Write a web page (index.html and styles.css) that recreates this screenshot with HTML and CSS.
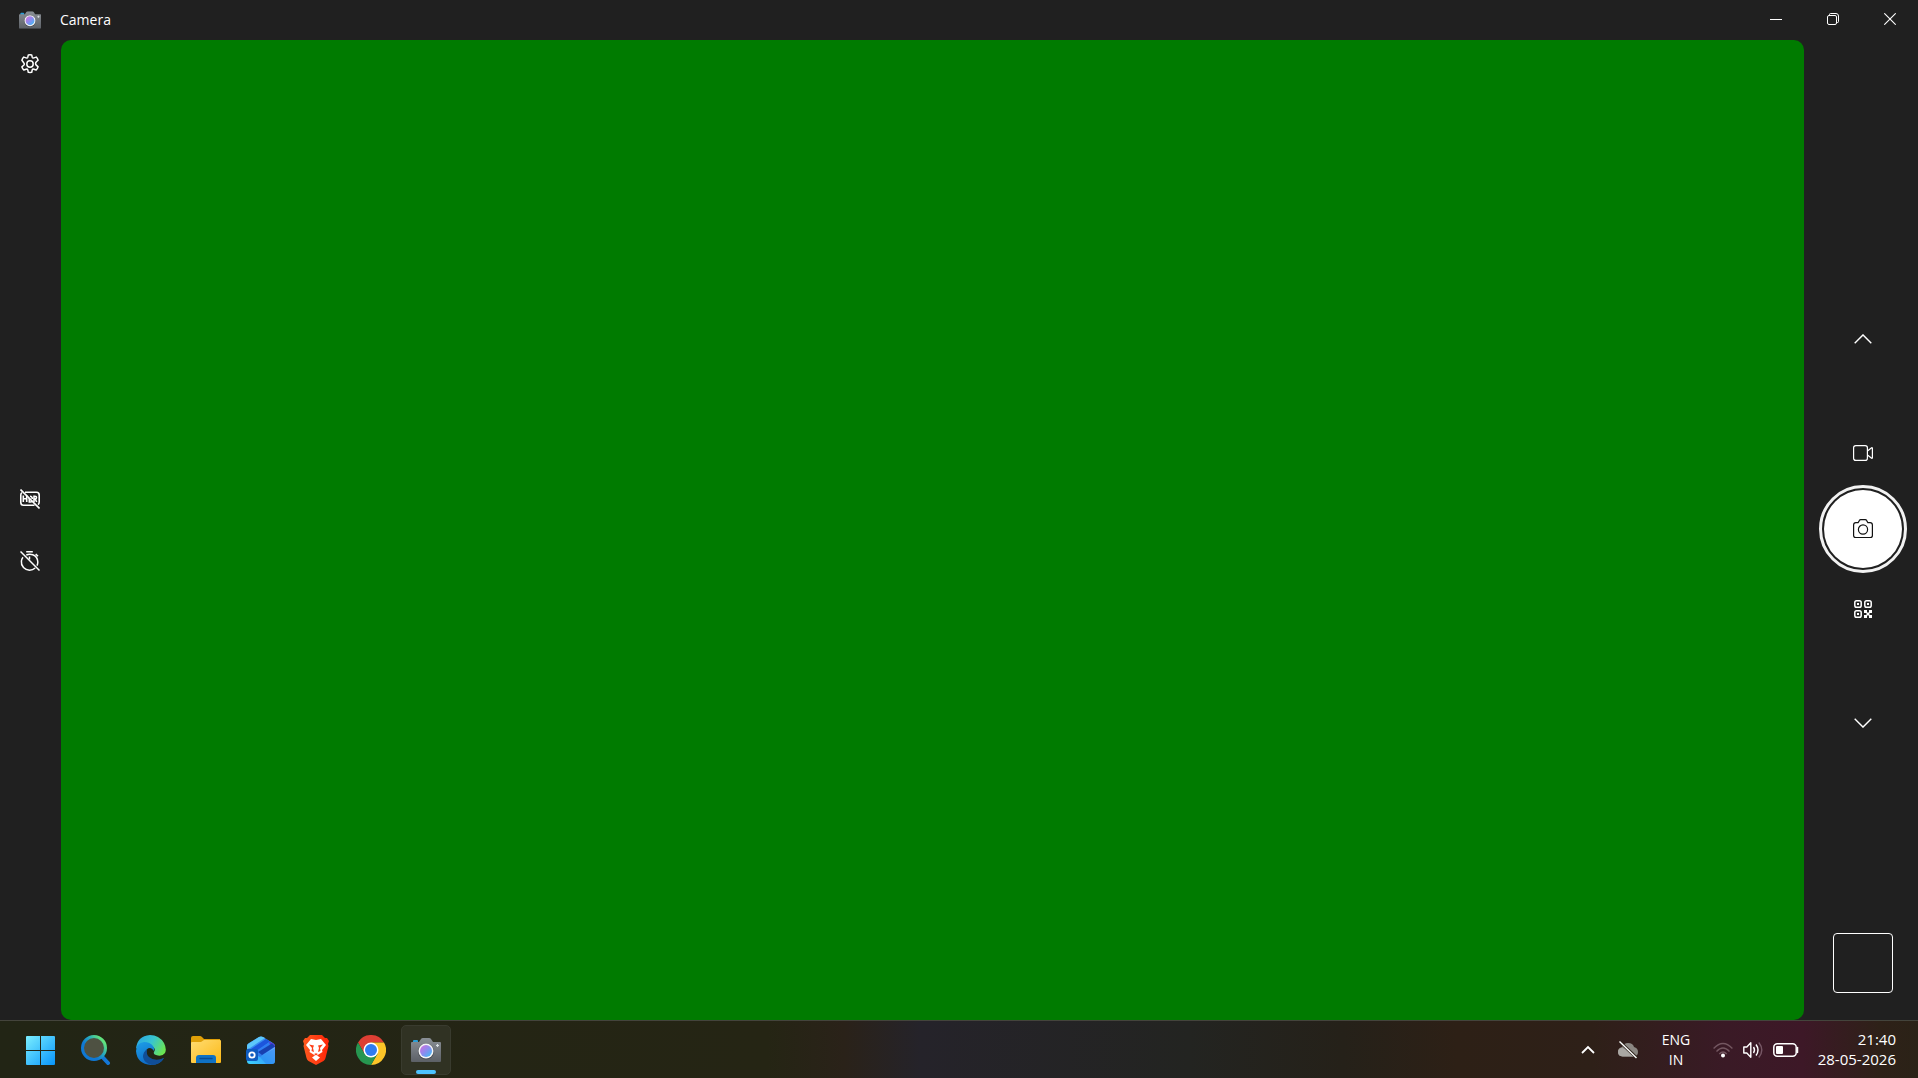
FILE: index.html
```html
<!DOCTYPE html>
<html lang="en">
<head>
<meta charset="utf-8">
<title>Camera</title>
<link rel="stylesheet" href="styles.css">
</head>
<body>
<svg class="defs" width="0" height="0" aria-hidden="true">
  <defs>
    <linearGradient id="body" x1="0" y1="0" x2="0" y2="1"><stop offset="0" stop-color="#8a9096"/><stop offset="1" stop-color="#5c6066"/></linearGradient>
    <linearGradient id="lens" x1="0" y1="0" x2="1" y2="1"><stop offset="0.1" stop-color="#c873e0"/><stop offset="0.5" stop-color="#8a8cf0"/><stop offset="1" stop-color="#35c4f4"/></linearGradient>
    <symbol id="camera-app" viewBox="0 0 30 24">
      <rect x="2" y="2" width="5" height="4" rx="1" fill="#2a9fd8"/>
      <path d="M0 5a1 1 0 0 1 1-1h7l2-3q.5-1 2-1h6q1.500 0 2 1l2 3h7a1 1 0 0 1 1 1v18a1 1 0 0 1-1 1H1a1 1 0 0 1-1-1z" fill="url(#body)"/>
      <circle cx="15" cy="13.500" r="8" fill="#4b4e55"/>
      <circle cx="15" cy="13" r="7.500" fill="#f4f4f6"/>
      <circle cx="15" cy="13" r="6" fill="url(#lens)"/>
      <path d="M26.500 6v3M25 7.500h3" stroke="#d8dde2" stroke-width="1.200"/>
    </symbol>
  </defs>
</svg>

<div class="screen">
  <header class="titlebar">
    <svg class="app-icon" viewBox="0 0 30 24"><use href="#camera-app"/></svg>
    <h1 class="app-title">Camera</h1>
    <div class="window-controls">
      <button class="window-button" aria-label="Minimize"><svg width="12" height="12" viewBox="0 0 12 12"><path d="M0 6.500h12" stroke="#fff"/></svg></button>
      <button class="window-button" aria-label="Restore"><svg width="12" height="12" viewBox="0 0 12 12" fill="none" stroke="#fff"><rect x=".5" y="2.500" width="9" height="9" rx="1.500"/><path d="M2.500 2V1.500q0-1 1-1H9q2.500 0 2.500 2.500v5.500q0 1-1 1H10"/></svg></button>
      <button class="window-button" aria-label="Close"><svg width="12" height="12" viewBox="0 0 12 12"><path d="M.3.3l11.400 11.400M11.700.3.3 11.700" stroke="#fff" stroke-width="1.100"/></svg></button>
    </div>
  </header>

  <main class="workspace">
    <aside class="tools">
      <div class="tools-top">
        <button class="tool" aria-label="Settings"><svg width="20" height="20" viewBox="0 0 20 20" fill="none" stroke="#fff" stroke-width="1.500" stroke-linejoin="round"><circle cx="10" cy="10" r="3.200"/><path d="M8.300.9q1.700-.3 3.400 0l.5 2.300q.4 1.100 1.700.7l2.300-.8q1.300 1.400 1.900 3.100l-1.700 1.500q-1.300 1.300-.6 2.900l2.300 2.300q-.5 1.700-1.900 3.100l-2.300-.8q-1.300-.4-1.700.8l-.5 2.300q-1.700.3-3.400 0l-.5-2.300q-.4-1.200-1.700-.8l-2.300.8q-1.300-1.400-1.900-3.100l1.800-1.600q1.200-1.300 0-2.600L1.900 6.200q.6-1.700 1.900-3.100l2.300.8q1.300.4 1.700-.7z"/></svg></button>
      </div>
      <div class="tools-middle">
        <button class="tool" aria-label="HDR off"><svg width="20" height="20" viewBox="0 0 20 20" fill="none" stroke="#fff" stroke-width="1.600"><path d="M5 3.200h11.500q2.700 0 2.700 2.700V13q0 1.800-1.200 2.600M14.500 16.200h-11Q.8 16.200.8 13.500V5.900q0-1.500 1.200-2.300"/><path d="M3.300 6.500v6.500M6.700 6.500v6.500M3.300 9.800h3.400M9.300 9v4h1.200q1 0 1.500-.7M10 7.200q2.300 0 2.300 2.800M14 13V7.200h1q1.500 0 1.500 1.400T15 10.100h-1M15.200 10l1.500 3"/><path d="M.5.5l19 19"/></svg></button>
        <button class="tool" aria-label="Photo timer off"><svg width="20" height="20" viewBox="0 0 20 20" fill="none" stroke="#fff" stroke-width="1.500"><path d="M6.200.8h6.600M9.500 5.500v3M15.700 3l2.300 2.300M6.300 4q3.200-1.500 6.500-.3 4.900 2 5 7.300 0 1.800-.8 3.600M15.200 17q-2.400 2.200-5.700 2.200-3.700-.2-6-2.700-2.600-3-2.100-6.500.3-2 1.600-3.700"/><path d="M.5.5l19 19"/></svg></button>
      </div>
    </aside>

    <section class="viewfinder" aria-label="Viewfinder"></section>

    <aside class="capture">
      <div class="modes">
        <button class="mode" aria-label="Previous mode"><svg width="18" height="10" viewBox="0 0 18 10"><path d="M.7 9.200 9 .9l8.300 8.300" fill="none" stroke="#fff" stroke-width="1.400"/></svg></button>
        <button class="mode mode-video" aria-label="Video mode"><svg width="20" height="16" viewBox="0 0 20 16" fill="none" stroke="#fff" stroke-width="1.200" stroke-linejoin="round"><rect x=".6" y=".6" width="13.800" height="14.800" rx="2.200"/><path d="M14.500 6l4.100-3.200q.8-.3.8.5v9.400q0 .8-.8.500L14.500 10"/></svg></button>
        <button class="shutter" aria-label="Take photo"><span class="shutter-face"><svg width="20" height="20" viewBox="0 0 20 20" fill="none" stroke="#111" stroke-width="1.200"><path d="M.6 6q0-2.300 2.300-2.300h2.200l1.200-2.100q.5-1 1.500-1h4.400q1 0 1.500 1l1.200 2.100h2.200q2.300 0 2.300 2.300v10.500q0 2-2 2H2.600q-2 0-2-2z"/><circle cx="10" cy="10.500" r="4.600"/></svg></span></button>
        <button class="mode mode-qr" aria-label="Barcode mode"><svg width="18" height="18" viewBox="0 0 18 18" fill="none" stroke="#fff" stroke-width="1.500"><rect x=".8" y=".8" width="6.400" height="6.400" rx="1.800"/><rect x="10.800" y=".8" width="6.400" height="6.400" rx="1.800"/><rect x=".8" y="10.800" width="6.400" height="6.400" rx="1.800"/><path d="M3 3h2v2H3zM13 3h2v2h-2zM3 13h2v2H3zM10 10h3v3h-3zM15 10h3v3h-3zM12.500 12.500h3v3h-3zM10 15h3v3h-3zM15 15h3v3h-3z" fill="#fff" stroke="none"/></svg></button>
        <button class="mode" aria-label="Next mode"><svg width="18" height="10" viewBox="0 0 18 10"><path d="M.7.8 9 9.100 17.300.8" fill="none" stroke="#fff" stroke-width="1.400"/></svg></button>
      </div>
      <button class="gallery" aria-label="Open camera roll"></button>
    </aside>
  </main>

  <footer class="taskbar">
    <nav class="apps">
      <button class="app" aria-label="Start"><svg width="30" height="30" viewBox="0 0 30 30"><defs><linearGradient id="win" gradientUnits="userSpaceOnUse" x1="0" y1="0" x2="29" y2="29"><stop offset="0" stop-color="#7df0ff"/><stop offset="1" stop-color="#0a97fb"/></linearGradient></defs><path fill="url(#win)" d="M1 1h13v14H0V2q0-1 1-1zM15 1h13q1 0 1 1v13H15zM0 16h14v14H1q-1 0-1-1zM15 16h14v13q0 1-1 1H15z"/></svg></button>
      <button class="app" aria-label="Search"><svg width="30" height="30" viewBox="0 0 30 30"><defs><linearGradient id="ring" x1=".1" y1=".9" x2=".9" y2=".2"><stop offset=".35" stop-color="#0f78d4"/><stop offset=".65" stop-color="#25a8c0"/><stop offset="1" stop-color="#62e27c"/></linearGradient></defs><path d="M20.500 21l6.500 7" stroke="#1478d8" stroke-width="4" stroke-linecap="round"/><circle cx="13" cy="13" r="11.500" fill="#4e5142" stroke="url(#ring)" stroke-width="3"/></svg></button>
      <button class="app" aria-label="Microsoft Edge"><svg width="30" height="30" viewBox="0 0 30 30"><defs><linearGradient id="edge-top" x1="0" y1=".2" x2="1" y2=".6"><stop offset="0" stop-color="#2aa7e4"/><stop offset=".5" stop-color="#38c5cf"/><stop offset="1" stop-color="#6be552"/></linearGradient><linearGradient id="edge-side" x1="0" y1="0" x2=".5" y2="1"><stop offset="0" stop-color="#1d9fe8"/><stop offset="1" stop-color="#0d67c4"/></linearGradient></defs><path fill="url(#edge-top)" d="M0 14Q1 1 14 0q9 0 14 8 3 6 1 10-3 4-9 2-3-1-2-3 2-3-1-5-2-3-8-4-6 0-9 6z"/><path fill="url(#edge-side)" d="M0 16Q0 8 8 7q6 0 9 4 2 2 1 5-2-3-4-3-4 0-4 5 0 7 8 8 5 0 10-3-4 7-13 7Q1 29 0 16z"/><path fill="#104e97" d="M11 14q-1 5 2 8 6 5 15 1-4 7-12 7-8-2-9-8 0-5 4-8z"/></svg></button>
      <button class="app" aria-label="File Explorer"><svg width="30" height="28" viewBox="0 0 30 28"><defs><linearGradient id="folder" x1="0" y1="0" x2="1" y2="1"><stop offset="0" stop-color="#ffdc72"/><stop offset="1" stop-color="#fcb916"/></linearGradient></defs><path fill="#dfa008" d="M0 2q0-2 2-2h7q1 0 2 1l2 2h16v7H0z"/><path fill="url(#folder)" d="M0 7q0-1 1-1h9l3-2h16q1 0 1 1v21q0 1-1 1H1q-1 0-1-1z"/><path fill="#0f72c4" d="M5 27v-5q0-3 3-3h14q3 0 3 3v5z"/><path d="M9 22.500h12" stroke="#084c94" stroke-width="1.500" stroke-linecap="round"/></svg></button>
      <button class="app" aria-label="Outlook"><svg width="30" height="30" viewBox="0 0 30 30"><defs><linearGradient id="flap" x1="0" y1="0" x2="1" y2="1"><stop offset="0" stop-color="#3f9ff5"/><stop offset="1" stop-color="#2a6ae8"/></linearGradient><linearGradient id="envelope" x1="0" y1="1" x2="1" y2=".2"><stop offset="0" stop-color="#3fd8ff"/><stop offset=".5" stop-color="#35a8fa"/><stop offset="1" stop-color="#6fb0fb"/></linearGradient></defs><path fill="url(#flap)" d="M1 11q0-2 2-3L13 2q2-1 4 0l10 6q2 1 2 3v12H1z"/><path fill="#5cc8fb" d="M2 9l11-7q2-1 4 0l2 1L4 13 1 14v-3q0-1 1-2z"/><path fill="#1c55dc" d="M5 14L20 4l4 2.500L10 17z"/><path fill="#2f7df2" d="M10 16L24 6.500l2 1.300L13 18z"/><path fill="#5a35cf" d="M23 6.500l4 2q2 1 2 3V13l-5-3z"/><path fill="#1740b0" d="M12 17l14-8.500 3 3L16 20z"/><path fill="url(#envelope)" d="M4 29q-3 0-3-3V15l13 7 15-10v14q0 3-3 3z"/><path fill="#2a86f0" d="M29 13v13q0 3-3 3h-6l-6-7z" opacity=".55"/><rect y="14" width="12" height="12" rx="2" fill="#0f5cc0"/><circle cx="6" cy="20" r="2.700" fill="none" stroke="#fff" stroke-width="1.800"/></svg></button>
      <button class="app" aria-label="Brave"><svg width="26" height="30" viewBox="0 0 26 30"><defs><linearGradient id="brave" x1="0" x2="1"><stop offset="0" stop-color="#ff5a1f"/><stop offset="1" stop-color="#ff2408"/></linearGradient></defs><path fill="url(#brave)" d="M7 0h12l3 3 2 0 2 3-1 3 .5 2-3 12q-.5 2-2 3L13 30l-7.500-4q-1.500-1-2-3L.5 11 1 9 0 6l2-3h2z"/><path fill="#fff" d="M8 4l5 1 5-1 5 6-4 5 .5 2-4 2.500-1.500 1 3 2-4 3.500-4-3.500 3-2-1.500-1L6.500 17l.5-2-4-5z"/><path fill="#ff401a" d="M6 9.500l5 1-1 2.500 1 4-2.500-1L9 13zM20 9.500l-5 1 1 2.500-1 4 2.500-1L17 13zM11 19l2 1.500 2-1.500-2-.7z"/></svg></button>
      <button class="app" aria-label="Google Chrome"><svg width="30" height="30" viewBox="0 0 30 30"><path fill="#dd3f34" d="M2 7.500a15 15 0 0 1 26 0H15L8.500 18.800z"/><path fill="#fcc528" d="M28 7.500A15 15 0 0 1 15 30l6.500-11.200L15 7.500z"/><path fill="#269650" d="M15 30A15 15 0 0 1 2 7.500l6.500 11.300 13 0z"/><circle cx="15" cy="15" r="7.500" fill="#fff"/><circle cx="15" cy="15" r="6" fill="#2f7cf0"/></svg></button>
      <button class="app app-active" aria-label="Camera"><svg width="30" height="24" viewBox="0 0 30 24"><use href="#camera-app"/></svg></button>
    </nav>
    <div class="tray">
      <button class="tray-button" aria-label="Show hidden icons"><svg width="14" height="9" viewBox="0 0 14 9"><path d="M1 8l6-6 6 6" fill="none" stroke="#fff" stroke-width="1.800"/></svg></button>
      <button class="tray-button" aria-label="OneDrive, not signed in"><svg width="20" height="18" viewBox="0 0 20 18"><path fill="#8b8782" d="M4.500 15.500Q0 15 0 11t4-5q2-4 6-4 5 0 6 4 4 1 4 5t-4 4.500z"/><path fill="#aaa7a3" d="M4.500 15.500Q0 15 0 11t4-4q3 0 5 3l7 5.500z"/><path d="M2 1l17 16" stroke="#2c2018" stroke-width="3"/><path d="M1.500.5l17 16.500" stroke="#fff" stroke-width="1.400"/></svg></button>
      <button class="language">ENG<br>IN</button>
      <button class="status" aria-label="Network, volume and battery">
        <svg width="20" height="16" viewBox="0 0 20 16" fill="none" stroke="#735660" stroke-width="1.300"><path d="M.6 6.500q9.400-10 18.800 0M3.500 9.500q6.500-7 13 0M6.300 12q3.700-4 7.400 0"/><circle cx="10" cy="13.500" r="2" fill="#fff" stroke="none"/></svg>
        <svg width="20" height="18" viewBox="0 0 20 18" fill="none" stroke="#fff" stroke-width="1.400" stroke-linejoin="round"><path d="M.8 6h3l4-4.200v14.400l-4-4.200h-3zM10.500 6q2 3 0 6M13 3.500q4 5.500 0 11"/><path d="M15.800 1.500q6 7.500 0 15" stroke="#765765"/></svg>
        <svg width="26" height="14" viewBox="0 0 26 14"><rect x=".8" y=".8" width="22.400" height="12.400" rx="3.500" fill="none" stroke="#fff" stroke-width="1.500"/><rect x="3" y="3" width="7" height="8" rx="1" fill="#fff"/><path d="M24.500 4.500v5" stroke="#fff" stroke-width="1.500" stroke-linecap="round"/></svg>
      </button>
      <button class="clock"><time datetime="2026-05-28T21:40">21:40<br>28-05-2026</time></button>
    </div>
  </footer>
</div>
</body>
</html>
```
FILE: styles.css
```css
* {
  box-sizing: border-box;
}

body {
  margin: 0;
  background: #202020;
  color: #fff;
  font-family: "Open Sans", "Noto Sans", sans-serif;
  font-size: 14px;
}

button {
  display: flex;
  align-items: center;
  justify-content: center;
  margin: 0;
  padding: 0;
  border: 0;
  background: none;
  color: inherit;
  font: inherit;
}

svg {
  display: block;
  flex: none;
}

.defs {
  position: absolute;
}

.screen {
  display: flex;
  flex-direction: column;
  height: 100vh;
}

/* Title bar */
.titlebar {
  display: flex;
  align-items: center;
  height: 40px;
  padding-left: 19px;
}

.app-icon {
  width: 22px;
  height: 18px;
}

.app-title {
  margin: 0 0 0 19px;
  font-size: 14px;
  font-weight: 400;
  line-height: 22px;
}

.window-controls {
  display: flex;
  align-self: flex-start;
  margin-left: auto;
}

.window-button {
  width: 57px;
  height: 38px;
}

/* Camera workspace */
.workspace {
  display: grid;
  grid-template-columns: 61px 1fr 114px;
  flex: 1;
  min-height: 0;
}

.tools {
  display: grid;
  grid-template-rows: 1fr auto 1fr;
  justify-items: center;
  padding-right: 2px;
}

.tools-middle {
  display: flex;
  flex-direction: column;
  gap: 14px;
}

.tool {
  width: 48px;
  height: 48px;
}

.viewfinder {
  border-radius: 10px;
  background: #007b00;
}

.capture {
  display: grid;
  grid-template-rows: 1fr auto 1fr;
  justify-items: center;
  padding-left: 4px;
}

.modes {
  display: flex;
  flex-direction: column;
  grid-row: 2;
  align-items: center;
  margin-top: 2px;
}

.mode {
  width: 48px;
  height: 48px;
}

.mode-video {
  margin: 66px 0 8px;
}

.mode-qr {
  margin: 12px 0 66px;
}

.shutter {
  width: 88px;
  height: 88px;
  border: 3px solid #f2f2f2;
  border-radius: 50%;
}

.shutter-face {
  display: flex;
  align-items: center;
  justify-content: center;
  width: 78px;
  height: 78px;
  border-radius: 50%;
  background: #fff;
}

.gallery {
  grid-row: 3;
  align-self: end;
  width: 60px;
  height: 60px;
  margin-bottom: 27px;
  border: 1px solid #fff;
  border-radius: 4px;
}

/* Taskbar */
.taskbar {
  display: flex;
  align-items: center;
  justify-content: space-between;
  height: 58px;
  padding: 0 22px 0 16px;
  border-top: 1px solid #44443c;
  background: linear-gradient(90deg, #222515 0%, #252514 40%, #2a2219 44%, #25232a 48%, #232421 62%, #252119 70%, #2d2016 76%, #2e2018 83%, #3a1a26 90%, #3d1827 94%, #2e2118 98%, #2b2217 100%);
}

.apps {
  display: flex;
  gap: 5px;
}

.app {
  width: 50px;
  height: 50px;
  border-radius: 5px;
}

.app-active {
  position: relative;
  border: 1px solid #393b2e;
  background: #303223;
}

.app-active::after {
  content: "";
  position: absolute;
  bottom: 0;
  width: 20px;
  height: 4px;
  border-radius: 2px;
  background: #4cc2ff;
}

.tray {
  display: flex;
  align-items: center;
}

.tray-button {
  width: 40px;
  height: 50px;
}

.language {
  width: 56px;
  height: 50px;
  line-height: 20px;
}

.status {
  gap: 10px;
  width: 104px;
  height: 50px;
}

.clock {
  justify-content: flex-end;
  width: 88px;
  height: 50px;
  padding-bottom: 2px;
  font-size: 15px;
  line-height: 20px;
  text-align: right;
}
```
